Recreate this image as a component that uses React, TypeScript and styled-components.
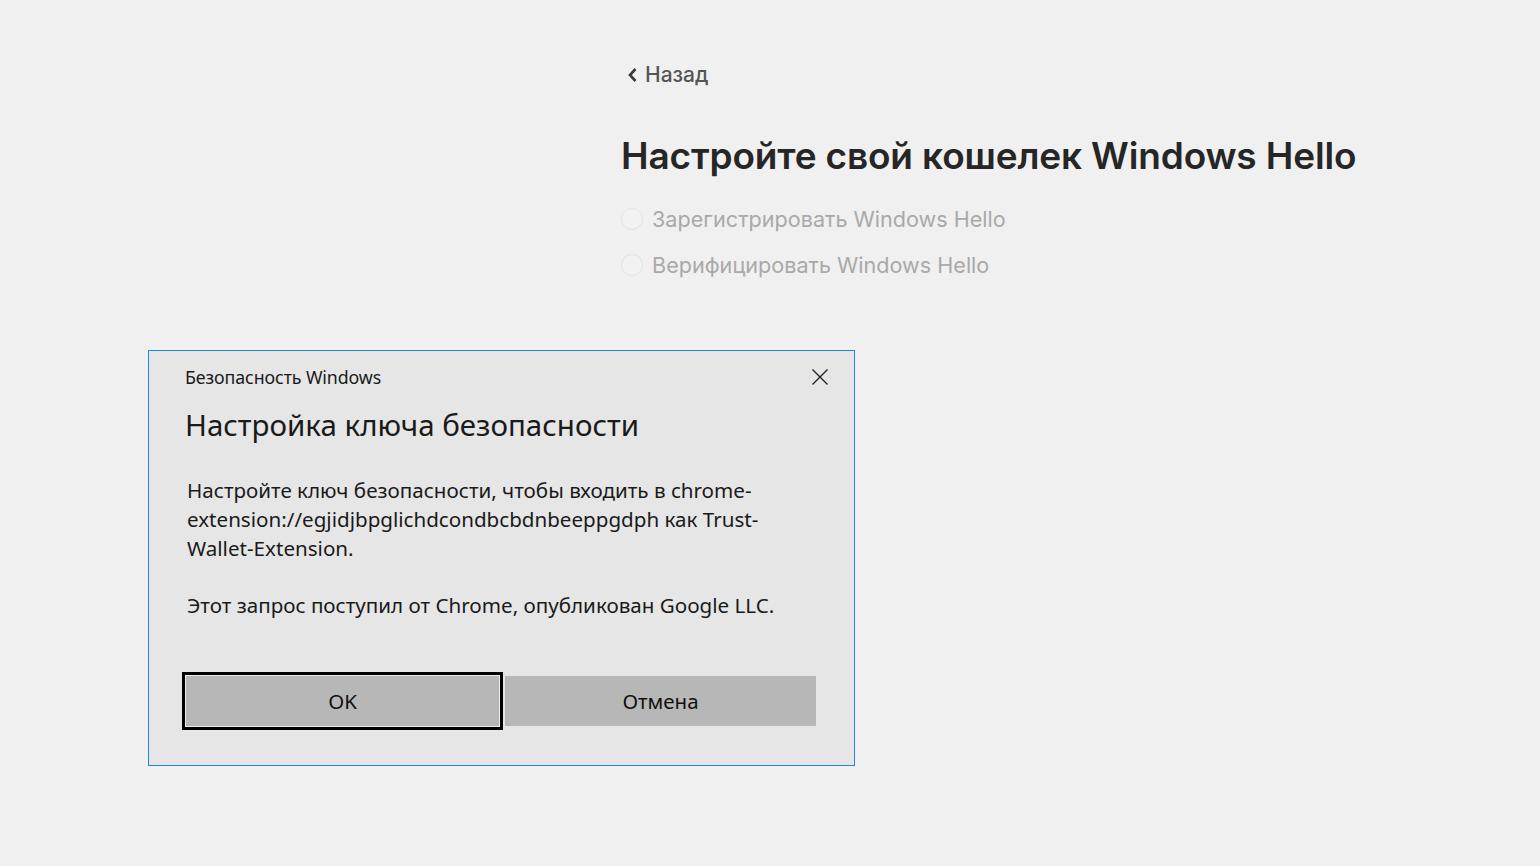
import React from "react";
import styled, { createGlobalStyle } from "styled-components";

const GlobalStyle = createGlobalStyle`
  html, body {
    margin: 0;
    padding: 0;
    background: #f0f0f0;
  }
  body {
    width: 1540px;
    height: 866px;
    overflow: hidden;
    font-family: Inter, "Noto Sans", sans-serif;
  }
`;

const Page = styled.div`
  position: relative;
  width: 1540px;
  height: 866px;
  background: #f0f0f0;
`;

const Content = styled.div`
  display: flex;
  flex-direction: column;
  padding: 62px 0 0 621px;
`;

const BackLink = styled.a`
  display: flex;
  align-items: center;
  gap: 7px;
  margin-left: 6px;
  font-size: 21px;
  font-weight: 500;
  color: #555;
  text-decoration: none;
  cursor: pointer;
`;

const Title = styled.h1`
  margin: 46px 0 0;
  font-size: 37px;
  line-height: 45px;
  font-weight: 600;
  color: #262626;
  letter-spacing: -0.15px;
`;

const Steps = styled.ul`
  list-style: none;
  margin: 28px 0 0;
  padding: 0;
  display: flex;
  flex-direction: column;
  gap: 20px;
`;

const Step = styled.li`
  display: flex;
  align-items: center;
  gap: 9px;
  font-size: 21.6px;
  color: #a9a9a9;
  height: 26px;
`;

const Radio = styled.span`
  width: 20px;
  height: 20px;
  border-radius: 50%;
  border: 1px solid #e2e2e2;
  background: #f2f2f2;
`;

const Dialog = styled.div`
  position: absolute;
  left: 148px;
  top: 350px;
  width: 707px;
  height: 416px;
  box-sizing: border-box;
  border: 1.5px solid #1e88e5;
  background: #e6e6e6;
  padding: 14px 36px 0 36px;
  display: flex;
  flex-direction: column;
  font-family: "Noto Sans", sans-serif;
  color: #1a1a1a;
`;

const DialogHeader = styled.div`
  display: flex;
  justify-content: space-between;
  align-items: center;
  height: 24px;
`;

const Caption = styled.span`
  font-size: 17.8px;
  letter-spacing: -0.1px;
`;

const CloseButton = styled.button`
  border: 0;
  background: transparent;
  padding: 0;
  margin-right: -10px;
  display: flex;
  cursor: pointer;
`;

const Heading = styled.h2`
  margin: 16px 0 0;
  font-size: 29.5px;
  line-height: 40px;
  font-weight: 400;
`;

const Body = styled.p<{ $top: number }>`
  margin: ${(p) => p.$top}px 0 0 2px;
  font-size: 20.6px;
  line-height: 29px;
`;

const Buttons = styled.div`
  display: flex;
  align-items: center;
  gap: 2px;
  margin-top: 52px;
  margin-left: -3px;
`;

const Button = styled.button<{ $primary?: boolean }>`
  width: ${(p) => (p.$primary ? "321px" : "311px")};
  height: ${(p) => (p.$primary ? "58px" : "50px")};
  box-sizing: border-box;
  background: #b7b7b7;
  border: ${(p) => (p.$primary ? "3px solid #000" : "0")};
  box-shadow: ${(p) => (p.$primary ? "inset 0 0 0 1px #ececec" : "none")};
  font-family: "Noto Sans", sans-serif;
  font-size: 20.5px;
  color: #111;
  cursor: pointer;
`;

const ChevronLeft = () => (
  <svg width="11" height="16" viewBox="0 0 11 16" fill="none">
    <path d="M8.5 2 L3 8 L8.5 14" stroke="#3a3a3a" strokeWidth="2.6" />
  </svg>
);

const CloseIcon = () => (
  <svg width="16" height="16" viewBox="0 0 16 16">
    <path d="M0.5 0.5 L15.5 15.5 M15.5 0.5 L0.5 15.5" stroke="#222" strokeWidth="1.4" />
  </svg>
);

export default function App() {
  return (
    <Page>
      <GlobalStyle />
      <Content>
        <BackLink>
          <ChevronLeft />
          Назад
        </BackLink>
        <Title>Настройте свой кошелек Windows Hello</Title>
        <Steps>
          <Step>
            <Radio />
            Зарегистрировать Windows Hello
          </Step>
          <Step>
            <Radio />
            Верифицировать Windows Hello
          </Step>
        </Steps>
      </Content>
      <Dialog>
        <DialogHeader>
          <Caption>Безопасность Windows</Caption>
          <CloseButton>
            <CloseIcon />
          </CloseButton>
        </DialogHeader>
        <Heading>Настройка ключа безопасности</Heading>
        <Body $top={31}>
          Настройте ключ безопасности, чтобы входить в chrome-
          <br />
          extension://egjidjbpglichdcondbcbdnbeeppgdph как Trust-
          <br />
          Wallet-Extension.
        </Body>
        <Body $top={28}>Этот запрос поступил от Chrome, опубликован Google LLC.</Body>
        <Buttons>
          <Button $primary>OK</Button>
          <Button>Отмена</Button>
        </Buttons>
      </Dialog>
    </Page>
  );
}
